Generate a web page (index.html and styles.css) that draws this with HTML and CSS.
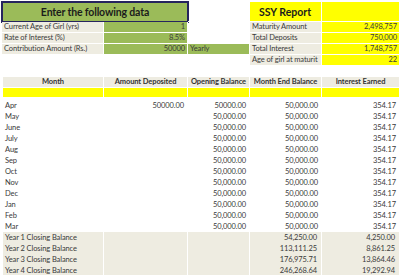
FILE: index.html
```html
<!DOCTYPE html>
<html>
<head>
<meta charset="utf-8">
<link rel="stylesheet" href="styles.css">
</head>
<body>
<div class="top">
  <div class="cell title green">Enter the following data</div>
  <div class="cell"></div>
  <div class="cell ssy-title yellow">SSY Report</div>
  <div class="cell yellow"></div>

  <div class="cell label">Current Age of Girl (yrs)</div>
  <div class="cell green num">1</div>
  <div class="cell"></div>
  <div class="cell label">Maturity Amount</div>
  <div class="cell yellow num">2,498,757</div>

  <div class="cell label">Rate of Interest (%)</div>
  <div class="cell green num">8.5%</div>
  <div class="cell"></div>
  <div class="cell label">Total Deposits</div>
  <div class="cell yellow num">750,000</div>

  <div class="cell label">Contribution Amount (Rs.)</div>
  <div class="cell green num">50000</div>
  <div class="cell green">Yearly</div>
  <div class="cell label">Total Interest</div>
  <div class="cell yellow num">1,748,757</div>

  <div class="cell"></div>
  <div class="cell"></div>
  <div class="cell"></div>
  <div class="cell label">Age of girl at maturit</div>
  <div class="cell yellow num">22</div>
</div>

<div class="sheet">
  <div class="row head">
    <div>Month</div><div>Amount Deposited</div><div>Opening Balance</div><div>Month End Balance</div><div>Interest Earned</div>
  </div>
  <div class="row band"><div></div><div></div><div></div><div></div><div></div></div>
  <div class="spacer"></div>
  <div class="row"><div>Apr</div><div class="num">50000.00</div><div class="num">50000.00</div><div class="num">50,000.00</div><div class="num">354.17</div></div>
  <div class="row"><div>May</div><div></div><div class="num">50,000.00</div><div class="num">50,000.00</div><div class="num">354.17</div></div>
  <div class="row"><div>June</div><div></div><div class="num">50,000.00</div><div class="num">50,000.00</div><div class="num">354.17</div></div>
  <div class="row"><div>July</div><div></div><div class="num">50,000.00</div><div class="num">50,000.00</div><div class="num">354.17</div></div>
  <div class="row"><div>Aug</div><div></div><div class="num">50,000.00</div><div class="num">50,000.00</div><div class="num">354.17</div></div>
  <div class="row"><div>Sep</div><div></div><div class="num">50,000.00</div><div class="num">50,000.00</div><div class="num">354.17</div></div>
  <div class="row"><div>Oct</div><div></div><div class="num">50,000.00</div><div class="num">50,000.00</div><div class="num">354.17</div></div>
  <div class="row"><div>Nov</div><div></div><div class="num">50,000.00</div><div class="num">50,000.00</div><div class="num">354.17</div></div>
  <div class="row"><div>Dec</div><div></div><div class="num">50,000.00</div><div class="num">50,000.00</div><div class="num">354.17</div></div>
  <div class="row"><div>Jan</div><div></div><div class="num">50,000.00</div><div class="num">50,000.00</div><div class="num">354.17</div></div>
  <div class="row"><div>Feb</div><div></div><div class="num">50,000.00</div><div class="num">50,000.00</div><div class="num">354.17</div></div>
  <div class="row"><div>Mar</div><div></div><div class="num">50,000.00</div><div class="num">50,000.00</div><div class="num">354.17</div></div>
  <div class="row year"><div>Year 1 Closing Balance</div><div></div><div></div><div class="num">54,250.00</div><div class="num">4,250.00</div></div>
  <div class="row year"><div>Year 2 Closing Balance</div><div></div><div></div><div class="num">113,111.25</div><div class="num">8,861.25</div></div>
  <div class="row year"><div>Year 3 Closing Balance</div><div></div><div></div><div class="num">176,975.71</div><div class="num">13,864.46</div></div>
  <div class="row year"><div>Year 4 Closing Balance</div><div></div><div></div><div class="num">246,268.64</div><div class="num">19,292.94</div></div>
</div>
</body>
</html>
```
FILE: styles.css
```css
html, body {
  margin: 0;
  padding: 0;
  background: #ffffff;
}
body {
  font-family: Lato, "Open Sans", "Liberation Sans", sans-serif;
  font-size: 7.5px;
  letter-spacing: -0.1px;
  color: #3a3a3a;
  width: 400px;
  height: 275px;
  overflow: hidden;
}
.top {
  display: grid;
  grid-template-columns: 102px 84px 62px 72px 78px;
  grid-template-rows: 20px repeat(4, 11px);
  margin: 2px 0 0 2px;
}
.cell {
  box-sizing: border-box;
  border-right: 1px solid #ffffff;
  border-bottom: 1px solid #ffffff;
  line-height: 10px;
  padding: 0 2px;
  white-space: nowrap;
  overflow: hidden;
}
.green { background: #9bbb59; }
.yellow { background: #ffff00; }
.label { background: #eeece1; }
.num { text-align: right; }
.title {
  grid-column: 1 / 3;
  font-weight: bold;
  font-size: 10.5px;
  letter-spacing: -0.15px;
  color: #1c1c1c;
  text-align: center;
  line-height: 20px;
  outline: 2px solid #26245e;
  outline-offset: -1px;
  border: none;
}
.ssy-title {
  font-weight: bold;
  font-size: 10.5px;
  letter-spacing: 0;
  color: #1c1c1c;
  line-height: 20px;
  padding-left: 9px;
}
.sheet {
  margin: 11px 0 0 3px;
  width: 397px;
}
.row {
  display: grid;
  grid-template-columns: 101px 84px 62px 72px 78px;
  height: 11px;
}
.row > div {
  box-sizing: border-box;
  padding: 0 2px;
  line-height: 11px;
  white-space: nowrap;
}
.row > .num {
  text-align: right;
  padding-right: 4px;
}
.head {
  height: 10px;
}
.head > div {
  background: #eeece1;
  font-weight: bold;
  line-height: 10px;
  text-align: center;
  border-right: 1px solid #ffffff;
  color: #333333;
}
.band {
  height: 10px;
}
.band > div {
  background: #ffff00;
  border-right: 1px solid #ffffff;
  border-top: 1px solid #ffffff;
}
.spacer {
  height: 3px;
}
.year > div {
  background: #eeece1;
  border-right: 1px solid #ffffff;
  border-bottom: 1px solid #ffffff;
}
```
